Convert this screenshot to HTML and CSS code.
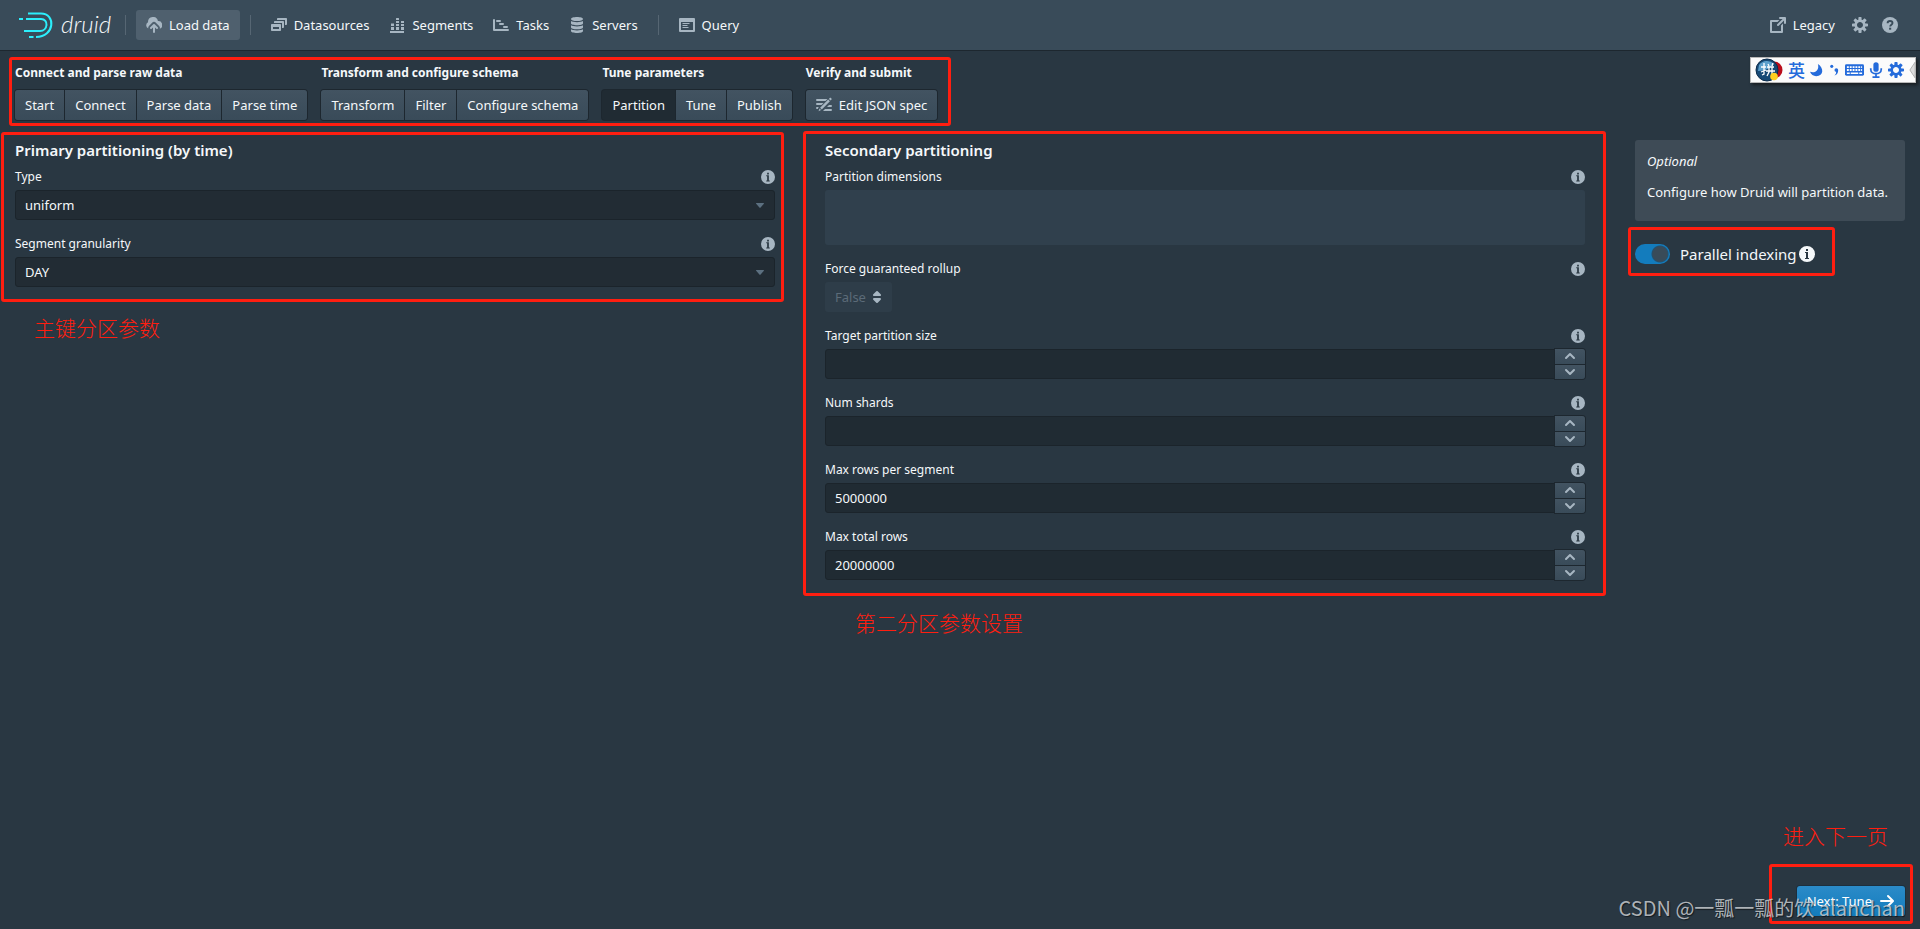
FILE: index.html
```html
<!DOCTYPE html>
<html lang="en">
<head>
<meta charset="utf-8">
<meta name="viewport" content="width=device-width, initial-scale=1">
<title>Druid - Load data</title>
<link rel="stylesheet" href="styles.css">
</head>
<body>
<svg class="sprite" aria-hidden="true">
  <symbol id="upload" viewBox="0 0 16 16"><path d="M8.71 7.29a1 1 0 0 0-1.42 0l-3 3a1 1 0 0 0 1.42 1.42L7 10.41V15a1 1 0 0 0 2 0v-4.59l1.29 1.3a1 1 0 0 0 1.42-1.42l-3-3zM12 4h-.1A5 5 0 0 0 2 5v.33A3.5 3.5 0 0 0 2.3 11.600a3 3 0 0 1 .6-2.7l3-3a3 3 0 0 1 4.200 0l3 3a3 3 0 0 1 .7 2.8A4 4 0 0 0 12 4z"/></symbol>
  <symbol id="sources" viewBox="0 0 16 16"><path d="M12 4H4c-.55 0-1 .45-1 1v1h8v5h1c.55 0 1-.45 1-1V5c0-.55-.45-1-1-1zm3-3H7c-.55 0-1 .45-1 1v1h8v5h1c.55 0 1-.45 1-1V2c0-.55-.45-1-1-1zM9 7H1c-.55 0-1 .45-1 1v5c0 .55.45 1 1 1h8c.55 0 1-.45 1-1V8c0-.55-.45-1-1-1zm-1 5H2v-2h6v2z"/></symbol>
  <symbol id="segments" viewBox="0 0 16 16"><path d="M1 14h14v2H1zM2 10h3v3H2zM2 6.500h3V9H2zM7 10h3v3H7zM7 7h3v2H7zM7 4h3v2H7zM7 1.500q0-.5.5-.5h2q.5 0 .5.5V3H7zM12 10h3v3h-3zM12 7h3v2h-3zM12 4h3v2h-3z"/></symbol>
  <symbol id="tasks" viewBox="0 0 16 16"><path d="M1 2a1 1 0 0 1 1 1v9h13a1 1 0 0 1 0 2H1a1 1 0 0 1-1-1V3a1 1 0 0 1 1-1zM4 3h3a1 1 0 0 1 0 2H4a1 1 0 0 1 0-2zM7 6h3a1 1 0 0 1 0 2H7a1 1 0 0 1 0-2zM11 9h3a1 1 0 0 1 0 2h-3a1 1 0 0 1 0-2z"/></symbol>
  <symbol id="servers" viewBox="0 0 16 16"><path d="M8 0c3.300 0 6 .8 6 1.900S11.300 4 8 4 2 3 2 1.900 4.700 0 8 0zM2 4c1 .7 3.400 1.200 6 1.200S13 4.700 14 4v2.500C14 7.400 11.300 8.200 8 8.200S2 7.400 2 6.500zM2 8.200c1 .7 3.400 1.200 6 1.200s5-.5 6-1.200v2.300c0 1-2.700 1.800-6 1.800s-6-.8-6-1.800zM2 12.200c1 .7 3.400 1.200 6 1.200s5-.5 6-1.200V14c0 1.200-2.700 2-6 2s-6-.8-6-2z"/></symbol>
  <symbol id="query" viewBox="0 0 16 16"><path fill-rule="evenodd" d="M1 1h14a1 1 0 0 1 1 1v12a1 1 0 0 1-1 1H1a1 1 0 0 1-1-1V2a1 1 0 0 1 1-1zm1 4v8h12V5zM3.500 6h7v1h-7zm0 2h5v1h-5zm0 2h6v1h-6z"/></symbol>
  <symbol id="share" viewBox="0 0 16 16"><path d="M15 0h-5a1 1 0 0 0 0 2h2.590L7.290 7.290a1 1 0 0 0 1.420 1.420L14 3.410V6a1 1 0 0 0 2 0V1a1 1 0 0 0-1-1zM11 8.500V14H2V5h5.500l2-2H1a1 1 0 0 0-1 1v11a1 1 0 0 0 1 1h11a1 1 0 0 0 1-1V6.500z"/></symbol>
  <symbol id="cog" viewBox="0 0 16 16"><path d="M15.190 6.390h-1.850c-.11-.37-.27-.71-.45-1.040l1.360-1.360c.31-.31.31-.82 0-1.130l-1.130-1.130c-.31-.31-.82-.31-1.130 0l-1.360 1.360c-.33-.17-.67-.33-1.040-.44V.79c0-.44-.36-.8-.8-.8h-1.600c-.44 0-.8.36-.8.8v1.860c-.39.12-.75.28-1.100.47l-1.300-1.300c-.3-.3-.79-.3-1.090 0L1.820 2.910c-.3.3-.3.79 0 1.090l1.300 1.300c-.2.34-.36.7-.48 1.090H.79c-.44 0-.8.36-.8.8v1.600c0 .44.36.8.8.8h1.850c.11.37.27.71.45 1.040l-1.360 1.360c-.31.31-.31.82 0 1.130l1.130 1.130c.31.31.82.31 1.130 0l1.360-1.360c.33.18.67.33 1.040.44v1.860c0 .44.36.8.8.8h1.600c.44 0 .8-.36.8-.8v-1.860c.39-.12.75-.28 1.100-.47l1.300 1.300c.3.3.79.3 1.090 0l1.090-1.090c.3-.3.3-.79 0-1.090l-1.300-1.300c.19-.35.36-.71.48-1.100h1.850c.44 0 .8-.36.8-.8v-1.600a.816.816 0 0 0-.81-.79zm-7.200 4.600c-1.660 0-3-1.340-3-3s1.340-3 3-3 3 1.340 3 3-1.340 3-3 3z"/></symbol>
  <symbol id="help" viewBox="0 0 16 16"><circle cx="8" cy="8" r="8"/><path d="M5.600 6.200C5.600 4.600 6.600 4 8 4s2.500.7 2.500 2c0 1.600-2.300 1.700-2.300 3.400" fill="none" stroke="#394b59" stroke-width="1.900"/><path d="M7.100 10.700h2.100v2H7.100z" fill="#394b59"/></symbol>
  <symbol id="info" viewBox="0 0 16 16"><path fill-rule="evenodd" d="M8 0a8 8 0 1 0 0 16A8 8 0 0 0 8 0zM7 3h2v2H7zm3 10H6v-1h1V7H6V6h3v6h1z"/></symbol>
  <symbol id="edit" viewBox="0 0 16 16"><path d="M1 8h4.500l2-2H1a1 1 0 0 0 0 2zm0-4h8.500l1.500-1.500.5-.5H1a1 1 0 0 0 0 2zm0 6a1 1 0 0 0 0 2h.8l.9-2zm14-2a1 1 0 0 1 0 2h-4l2-2zm0 4a1 1 0 0 1 0 2H7l2-2zM12.200 2.600l1.700 1.700-8.100 8.100-1.700-1.700zM12.900 1.900l.8-.8c.9-.9 2.500.7 1.700 1.700l-.8.8zM3.500 11.500l1.600 1.600L2.500 14.300z"/></symbol>
  <symbol id="updown" viewBox="0 0 16 16"><path d="M5 7h6a1 1 0 0 0 .71-1.710l-3-3a1 1 0 0 0-1.420 0l-3 3A1 1 0 0 0 5 7zm6 2H5a1 1 0 0 0-.71 1.710l3 3a1 1 0 0 0 1.420 0l3-3A1 1 0 0 0 11 9z"/></symbol>
  <symbol id="up" viewBox="0 0 16 16"><path d="M12.710 9.290l-4-4a1 1 0 0 0-1.420 0l-4 4a1 1 0 0 0 1.420 1.420L8 7.410l3.290 3.290a1 1 0 0 0 1.420-1.410z"/></symbol>
  <symbol id="down" viewBox="0 0 16 16"><path d="M12 5a1 1 0 0 0-.71.290L8 8.590l-3.290-3.300a1 1 0 0 0-1.420 1.420l4 4a1 1 0 0 0 1.420 0l4-4A1 1 0 0 0 12 5z"/></symbol>
  <symbol id="caret" viewBox="0 0 16 16"><path d="M12 6.500c0-.28-.22-.5-.5-.5h-7a.495.495 0 0 0-.37.830l3.500 4c.09.1.22.17.37.17s.28-.07.37-.17l3.500-4c.08-.09.13-.2.13-.33z"/></symbol>
  <symbol id="arrow" viewBox="0 0 16 16"><path d="M14.700 7.290l-5-5a1 1 0 0 0-1.420 1.410l3.290 3.290H2a1 1 0 0 0 0 2h9.590l-3.300 3.300a1 1 0 0 0 1.420 1.420l5-5a1 1 0 0 0 0-1.420z"/></symbol>
</svg>

<header class="navbar">
  <a class="brand" href="#" aria-label="druid">
    <svg class="brand-mark" viewBox="0 0 34 26" fill="none" stroke="#2ceefb" stroke-width="2" aria-hidden="true"><path d="M0 7h4M7 7h15c8 0 7 12-1 12H5M9 1.500h13c15 0 14 23.500-5 23.500M10 25h4.500"/></svg>
    <span>druid</span>
  </a>
  <span class="divider"></span>
  <nav class="menu">
    <a class="nav-item active" href="#"><svg class="icon"><use href="#upload"/></svg>Load data</a>
    <span class="divider"></span>
    <a class="nav-item" href="#"><svg class="icon"><use href="#sources"/></svg>Datasources</a>
    <a class="nav-item" href="#"><svg class="icon"><use href="#segments"/></svg>Segments</a>
    <a class="nav-item" href="#"><svg class="icon"><use href="#tasks"/></svg>Tasks</a>
    <a class="nav-item" href="#"><svg class="icon"><use href="#servers"/></svg>Servers</a>
    <span class="divider"></span>
    <a class="nav-item" href="#"><svg class="icon"><use href="#query"/></svg>Query</a>
  </nav>
  <div class="menu menu-end">
    <a class="nav-item" href="#"><svg class="icon"><use href="#share"/></svg>Legacy</a>
    <button class="nav-icon" type="button" aria-label="Settings"><svg class="icon"><use href="#cog"/></svg></button>
    <button class="nav-icon" type="button" aria-label="Help"><svg class="icon"><use href="#help"/></svg></button>
  </div>
</header>

<div class="ime" lang="zh-CN">
  <svg class="ime-logo" viewBox="0 0 28 24" aria-hidden="true"><circle cx="19" cy="12" r="8.500" fill="#b90b1a"/><circle cx="12" cy="12" r="11" fill="#174a76" stroke="#0c2c4b"/><path d="M4 7a10 10 0 0 1 15-1c-3 4-9 7-16 7z" fill="#5ca0cc"/><path d="M6 9h5M9 5v11l-2 1M6 14l5-2M13 6l1 2M18 5l-1 3M12 9h7M11 13h9M14 9v5l-2 4M17 9v9" fill="none" stroke="#fff" stroke-width="1.300"/><circle cx="19" cy="18.500" r="3.800" fill="#ffcf20"/></svg>
  <span>英</span>
  <svg class="ime-small" viewBox="0 0 16 16" fill="#246bdb" aria-hidden="true"><path d="M9 1c7 4 7 14-2 14-3 0-6-2-7-5 6 2 11-2 9-9z"/></svg>
  <svg class="ime-dots" viewBox="0 0 12 16" fill="#246bdb" aria-hidden="true"><circle cx="3" cy="4" r="1.700"/><path d="M6 8a2 2 0 0 1 4 0c0 3-1 5-4 6 2-2 2-3 1.500-4A2 2 0 0 1 6 8z"/></svg>
  <svg class="ime-keys" viewBox="0 0 20 14" aria-hidden="true"><rect y="1" width="20" height="12" rx="1.500" fill="#246bdb"/><path d="M2 4h16M2 7h16" stroke="#fff" stroke-width="2" stroke-dasharray="2 1"/><path d="M2 10.500h3M6 10.500h8M15 10.500h3" stroke="#fff" stroke-width="1.500"/></svg>
  <svg class="ime-small" viewBox="0 0 16 18" aria-hidden="true"><rect x="5" width="6" height="11" rx="3" fill="#246bdb"/><path d="M2 7v1c0 7 12 7 12 0V7M8 13v4M4 17h8" fill="none" stroke="#246bdb" stroke-width="2"/></svg>
  <svg class="ime-gear" fill="#246bdb" aria-hidden="true"><use href="#cog"/></svg>
  <svg class="ime-arrow" viewBox="0 0 8 18" aria-hidden="true"><path d="M7 0v18L1 9z" fill="#ddd" stroke="#aaa"/></svg>
</div>

<section class="steps" aria-label="Steps">
  <div class="step-group"><h2>Connect and parse raw data</h2>
    <div class="buttons"><button type="button">Start</button><button type="button">Connect</button><button type="button">Parse data</button><button type="button">Parse time</button></div></div>
  <div class="step-group"><h2>Transform and configure schema</h2>
    <div class="buttons"><button type="button">Transform</button><button type="button">Filter</button><button type="button">Configure schema</button></div></div>
  <div class="step-group"><h2>Tune parameters</h2>
    <div class="buttons"><button class="current" type="button">Partition</button><button type="button">Tune</button><button type="button">Publish</button></div></div>
  <div class="step-group"><h2>Verify and submit</h2>
    <div class="buttons"><button type="button"><svg class="icon"><use href="#edit"/></svg>Edit JSON spec</button></div></div>
  <span class="mark mark-steps"></span>
</section>

<main class="content">
  <section class="panel">
    <h3>Primary partitioning (by time)</h3>
    <div class="field">
      <div class="label-row"><label for="type">Type</label><svg class="info"><use href="#info"/></svg></div>
      <div class="select"><select id="type"><option>uniform</option></select><svg class="icon"><use href="#caret"/></svg></div>
    </div>
    <div class="field">
      <div class="label-row"><label for="gran">Segment granularity</label><svg class="info"><use href="#info"/></svg></div>
      <div class="select"><select id="gran"><option>DAY</option></select><svg class="icon"><use href="#caret"/></svg></div>
    </div>
    <span class="mark mark-primary"></span>
    <p class="note note-primary" lang="zh-CN">主键分区参数</p>
  </section>

  <section class="panel">
    <h3>Secondary partitioning</h3>
    <div class="field">
      <div class="label-row"><label for="dims">Partition dimensions</label><svg class="info"><use href="#info"/></svg></div>
      <textarea id="dims" disabled></textarea>
    </div>
    <div class="field">
      <div class="label-row"><label for="rollup">Force guaranteed rollup</label><svg class="info"><use href="#info"/></svg></div>
      <button class="toggle-value" id="rollup" type="button" disabled>False<svg class="icon"><use href="#updown"/></svg></button>
    </div>
    <div class="field">
      <div class="label-row"><label for="target">Target partition size</label><svg class="info"><use href="#info"/></svg></div>
      <div class="number"><input id="target" type="text" inputmode="numeric"><div class="spin"><button type="button" aria-label="Increase"><svg class="icon"><use href="#up"/></svg></button><button type="button" aria-label="Decrease"><svg class="icon"><use href="#down"/></svg></button></div></div>
    </div>
    <div class="field">
      <div class="label-row"><label for="shards">Num shards</label><svg class="info"><use href="#info"/></svg></div>
      <div class="number"><input id="shards" type="text" inputmode="numeric"><div class="spin"><button type="button" aria-label="Increase"><svg class="icon"><use href="#up"/></svg></button><button type="button" aria-label="Decrease"><svg class="icon"><use href="#down"/></svg></button></div></div>
    </div>
    <div class="field">
      <div class="label-row"><label for="maxseg">Max rows per segment</label><svg class="info"><use href="#info"/></svg></div>
      <div class="number"><input id="maxseg" type="text" inputmode="numeric" value="5000000"><div class="spin"><button type="button" aria-label="Increase"><svg class="icon"><use href="#up"/></svg></button><button type="button" aria-label="Decrease"><svg class="icon"><use href="#down"/></svg></button></div></div>
    </div>
    <div class="field">
      <div class="label-row"><label for="maxtotal">Max total rows</label><svg class="info"><use href="#info"/></svg></div>
      <div class="number"><input id="maxtotal" type="text" inputmode="numeric" value="20000000"><div class="spin"><button type="button" aria-label="Increase"><svg class="icon"><use href="#up"/></svg></button><button type="button" aria-label="Decrease"><svg class="icon"><use href="#down"/></svg></button></div></div>
    </div>
    <span class="mark mark-secondary"></span>
    <p class="note note-secondary" lang="zh-CN">第二分区参数设置</p>
  </section>

  <aside class="side">
    <div class="callout"><p><em>Optional</em></p><p>Configure how Druid will partition data.</p></div>
    <div class="switch-row">
      <label class="switch"><input type="checkbox" checked>Parallel indexing</label><svg class="icon"><use href="#info"/></svg>
      <span class="mark mark-switch"></span>
    </div>
  </aside>
</main>

<footer class="footer">
  <div class="next">
    <button class="primary" type="button">Next: Tune<svg class="icon"><use href="#arrow"/></svg></button>
    <span class="mark mark-next"></span>
    <p class="note note-next" lang="zh-CN">进入下一页</p>
    <p class="watermark" lang="zh-CN">CSDN @一瓢一瓢的饮 alanchan</p>
  </div>
</footer>
</body>
</html>
```
FILE: styles.css
```css
* { box-sizing: border-box; }

body {
  margin: 0;
  min-height: 100vh;
  display: flex;
  flex-direction: column;
  background: #293742;
  color: #f5f8fa;
  font: 13px/18px "Segoe UI", "Noto Sans", "Noto Sans CJK SC", sans-serif;
}

h2, h3, p { margin: 0; }
button, input, select, textarea { font: inherit; color: inherit; }
button { cursor: pointer; }
a { color: inherit; text-decoration: none; }
.sprite { position: absolute; width: 0; height: 0; }
.icon { width: 16px; height: 16px; flex: none; fill: #a7b6c2; }

/* Navigation */
.navbar {
  display: flex;
  align-items: center;
  height: 51px;
  padding: 0 15px 0 19px;
  background: #394b59;
  border-bottom: 1px solid #1d272f;
}
.brand { display: flex; align-items: center; gap: 8px; width: 96px; font: italic 300 24px/24px "Lato Light", Lato, sans-serif; }
.brand span { padding-bottom: 2px; }
.brand-mark { width: 34px; height: 26px; flex: none; }
.menu { display: flex; align-items: center; }
.menu-end { margin-left: auto; }
.divider { width: 1px; height: 20px; margin: 0 10px; background: #566673; }
.nav-item { display: flex; align-items: center; gap: 7px; height: 30px; padding: 0 10px; border-radius: 3px; }
.nav-item.active { background: #4f606e; }
.nav-icon { display: flex; padding: 7px; border: 0; background: none; }

/* Input method bar */
.ime {
  position: absolute;
  top: 57px;
  right: 4px;
  display: flex;
  align-items: center;
  gap: 5px;
  width: 166px;
  height: 26px;
  padding: 0 0 0 4px;
  border: 1px solid #b8b8b8;
  background: #fbfbfb;
  box-shadow: 2px 2px 3px #111a;
  color: #246bdb;
  font: 500 17px/24px "Noto Sans CJK SC", sans-serif;
}
.ime svg { flex: none; }
.ime-logo { width: 28px; height: 24px; }
.ime-small { width: 14px; height: 16px; }
.ime-dots { width: 11px; height: 16px; }
.ime-keys { width: 19px; height: 14px; }
.ime-gear { width: 16px; height: 16px; }
.ime-arrow { width: 7px; height: 18px; }

/* Step bar */
.steps { position: relative; display: flex; gap: 14px; width: fit-content; margin: 13px 15px 0; }
.step-group h2 { margin-bottom: 8px; font-size: 12px; line-height: 18px; font-weight: 700; }
.buttons { display: flex; gap: 1px; }
.buttons button {
  display: flex;
  align-items: center;
  gap: 7px;
  height: 30px;
  padding: 0 10px;
  border: 0;
  background: linear-gradient(#425361, #394b59);
  box-shadow: 0 0 0 1px #1d272f;
  white-space: nowrap;
}
.buttons button:first-child { border-radius: 3px 0 0 3px; }
.buttons button:last-child { border-radius: 0 3px 3px 0; }
.buttons button:only-child { border-radius: 3px; }
.buttons .current { background: #202b33; }

/* Form */
.content { display: grid; grid-template-columns: minmax(0, 1fr) minmax(0, 1fr) 270px; gap: 50px; padding: 18px 15px 0; }
.panel { position: relative; align-self: start; }
.panel h3 { margin-bottom: 8px; font-size: 15px; line-height: 24px; font-weight: 600; }
.panel h3 { margin-bottom: 6px; }
.field { margin-bottom: 15px; }
.label-row { display: flex; align-items: center; justify-content: space-between; height: 18px; margin-bottom: 4px; font-size: 12px; }
.info { width: 14px; height: 14px; fill: #a7b6c2; }
.select { position: relative; }
.select .icon { position: absolute; top: 7px; right: 7px; fill: #5c7080; pointer-events: none; }
select, .number input {
  display: block;
  width: 100%;
  height: 30px;
  padding: 0 9px;
  border: 1px solid #1b242b;
  border-radius: 3px;
  background: #222c34;
  appearance: none;
}
textarea { display: block; width: 100%; height: 55px; border: 0; border-radius: 3px; background: #30404d; resize: none; }
.toggle-value { display: flex; align-items: center; gap: 3px; height: 30px; padding: 0 7px 0 10px; border: 0; border-radius: 3px; background: #2e3d49; color: #5c6b78; }
.number { display: flex; }
.number input { flex: 1; min-width: 0; border-radius: 3px 0 0 3px; background: #202b33; }
.spin { display: grid; grid-template-rows: 1fr 1fr; gap: 1px; width: 30px; height: 30px; }
.spin button {
  display: flex;
  align-items: center;
  justify-content: center;
  min-height: 0;
  padding: 0;
  border: 0;
  background: linear-gradient(#425361, #394b59);
  box-shadow: 0 0 0 1px #1d272f;
}
.spin button:first-child { border-top-right-radius: 3px; }
.spin button:last-child { border-bottom-right-radius: 3px; }

.side { padding-top: 2px; }
.callout { padding: 12px 12px 20px; border-radius: 3px; background: #3e4b56; }
.callout p + p { margin-top: 13px; }
.switch-row { position: relative; display: flex; align-items: center; gap: 2px; width: fit-content; margin-top: 22px; }
.switch-row .icon { fill: #f5f8fa; }
.switch { display: flex; align-items: center; gap: 10px; font-size: 15px; line-height: 22px; }
.switch input {
  width: 35px;
  height: 20px;
  margin: 0;
  border-radius: 10px;
  background: radial-gradient(circle at 25px 10px, #394b59 7px, #24516f 8px, #137cbd 9px);
  appearance: none;
}

/* Footer */
.footer { display: flex; justify-content: flex-end; margin-top: auto; padding: 0 15px 13px; }
.next { position: relative; }
.primary {
  display: flex;
  align-items: center;
  gap: 7px;
  height: 30px;
  padding: 0 10px;
  border: 0;
  border-radius: 3px;
  background: linear-gradient(#2b8bc8, #137cbd);
  box-shadow: 0 0 0 1px #1d2f3d;
  color: #fff;
}
.primary .icon { fill: #fff; }

/* Annotations laid over the page */
.mark { position: absolute; border: 3px solid #ff1e10; border-radius: 3px; pointer-events: none; }
.mark-steps { inset: -7px -14px -6px -6px; }
.mark-primary { inset: -6px -9px 0 -14px; }
.mark-secondary { inset: -7px -21px -1px -22px; }
.mark-switch { inset: -16px -20px -11px -7px; }
.mark-next { inset: -22px -8px -8px -28px; }
.note { position: absolute; color: #ff1e10; font: 300 21px/30px "Noto Sans CJK SC", sans-serif; white-space: nowrap; }
.note-primary { top: calc(100% + 10px); left: 19px; }
.note-secondary { top: calc(100% + 12px); left: 30px; }
.note-next { right: 17px; bottom: 66px; }
.watermark {
  position: absolute;
  right: 0;
  bottom: -6px;
  color: #c8ccd0d9;
  font: 20px/28px "Noto Sans CJK SC", sans-serif;
  text-shadow: 1px 1px 1px #0008;
  white-space: nowrap;
}
```
